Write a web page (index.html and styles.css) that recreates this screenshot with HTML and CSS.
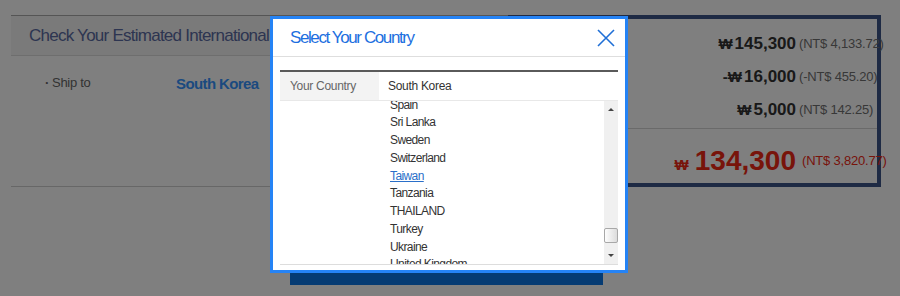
FILE: index.html
```html
<html>

<head>
    <title>Estimated Shipping</title>
    <link rel="stylesheet" href="styles.css">
</head>

<body>
	<div class="estimate">
		<div class="est-main">
			<h2 class="est-title">Check Your Estimated International Shipping Fee</h2>
			<div class="est-row">
				<span class="est-label">Ship to</span>
				<span class="est-country">South Korea</span>
			</div>
		</div>
		<div class="est-summary">
			<div class="sum-lines">
				<span class="amt"><span class="won">₩</span>145,300</span><span class="conv">(NT$ 4,133.72)</span>
				<span class="amt"><span class="won">-₩</span>16,000</span><span class="conv">(-NT$ 455.20)</span>
				<span class="amt"><span class="won">₩</span>5,000</span><span class="conv">(NT$ 142.25)</span>
			</div>
			<div class="sum-total">
				<span class="amt"><span class="won">₩</span>134,300</span><span class="conv">(NT$ 3,820.77)</span>
			</div>
		</div>
	</div>
	<div class="confirm-bar"></div>

	<div class="dim"></div>

	<div class="modal">
		<div class="modal-head">
			<span class="modal-title">Select Your Country</span>
			<svg class="modal-close" width="18" height="18" viewBox="0 0 18 18">
				<path d="M1 1 L17 17 M17 1 L1 17" stroke="#1f6fd6" stroke-width="1.6" fill="none"/>
			</svg>
		</div>
		<div class="modal-body">
			<table class="country-table">
				<tr><th>Your Country</th><td>South Korea</td></tr>
			</table>
			<div class="country-box">
				<div class="country-list">
					<ul>
						<li>Spain</li>
						<li>Sri Lanka</li>
						<li>Sweden</li>
						<li>Switzerland</li>
						<li><a class="current">Taiwan</a></li>
						<li>Tanzania</li>
						<li>THAILAND</li>
						<li>Turkey</li>
						<li>Ukraine</li>
						<li>United Kingdom</li>
						<li>United States</li>
					</ul>
				</div>
				<div class="scrollbar">
					<div class="sb-btn"><span class="arrow-up"></span></div>
					<div class="sb-track"><div class="sb-thumb" style="margin-top:110px"></div></div>
					<div class="sb-btn"><span class="arrow-down"></span></div>
				</div>
			</div>
		</div>
	</div>
</body>

</html>
```

FILE: styles.css
```css
body {
	margin: 0;
	background-color: white;
	font-family: "Liberation Sans", Arial, sans-serif;
	color: #333;
}

/* page behind the popup */

.estimate {
	display: flex;
	margin: 15px 19px 0 11px;
	height: 172px;
}

.est-main {
	flex: 1;
	border-top: 1px solid #aaa;
	border-bottom: 1px solid #cfcfcf;
	overflow: hidden;
}

.est-title {
	margin: 0;
	height: 39px;
	line-height: 40px;
	padding-left: 18px;
	background-color: #f4f4f4;
	border-bottom: 1px solid #dcdcdc;
	font-size: 17px;
	font-weight: 400;
	letter-spacing: -0.75px;
	color: #5a6aa2;
	white-space: nowrap;
}

.est-row {
	display: flex;
	padding: 18px 0 0 34px;
	line-height: 18px;
}

.est-label {
	width: 131px;
	font-size: 13px;
	color: #666;
	letter-spacing: -0.3px;
}

.est-label:before {
	content: "\00B7";
	font-weight: 700;
	margin-right: 3px;
}

.est-country {
	font-size: 15px;
	font-weight: 700;
	color: #3794ff;
	letter-spacing: -0.6px;
	margin-top: 1px;
}

.est-summary {
	width: 365px;
	border: 4px solid #3d5588;
}

.sum-lines {
	display: grid;
	grid-template-columns: 1fr 78px;
	column-gap: 3px;
	padding: 8px 0 2px;
	border-bottom: 1px solid #d4d4d4;
	line-height: 33px;
}

.amt {
	text-align: right;
	font-size: 17px;
	font-weight: 700;
	color: #333;
	white-space: nowrap;
}

.amt .won {
	font-size: 15px;
	margin-right: 2px;
}

.conv {
	font-size: 13px;
	color: #707070;
	letter-spacing: -0.2px;
	white-space: nowrap;
}

.sum-total {
	display: grid;
	grid-template-columns: 1fr 75px;
	column-gap: 6px;
	padding-top: 15px;
	line-height: 34px;
	color: #f02814;
}

.sum-total .amt {
	font-size: 28px;
	color: #f02814;
}

.sum-total .amt .won {
	font-size: 15px;
	margin-right: 6px;
}

.sum-total .conv {
	font-size: 13px;
	color: #f02814;
}

.confirm-bar {
	margin: 62px 0 0 290px;
	width: 313px;
	height: 36px;
	background-color: #0b76e6;
}

/* popup */

.dim {
	position: fixed;
	top: 0;
	left: 0;
	right: 0;
	bottom: 0;
	background-color: rgba(0, 0, 0, 0.5);
}

.modal {
	position: absolute;
	left: 270px;
	top: 16px;
	width: 358px;
	height: 257px;
	box-sizing: border-box;
	border: 3px solid #2583f5;
	background-color: white;
}

.modal-head {
	display: flex;
	align-items: center;
	justify-content: space-between;
	height: 37px;
	padding: 0 10px 0 17px;
	border-bottom: 1px solid #dedede;
}

.modal-title {
	font-size: 17px;
	letter-spacing: -1.4px;
	color: #1d6fe0;
}

.modal-close {
	margin-top: 1px;
}

.modal-body {
	padding: 13px 7px 0;
}

.country-table {
	width: 100%;
	border-collapse: collapse;
	border-top: 2px solid #5a5a5a;
	font-size: 12px;
}

.country-table th,
.country-table td {
	height: 29px;
	padding: 1px 0 0;
	text-align: left;
	font-weight: 400;
	border-bottom: 1px solid #e8e8e8;
	letter-spacing: -0.3px;
}

.country-table th {
	width: 89px;
	padding-left: 10px;
	background-color: #f3f3f3;
	color: #666;
}

.country-table td {
	padding-left: 9px;
	color: #333;
}

.country-box {
	display: flex;
	height: 163px;
	border-bottom: 1px solid #dddddd;
}

.country-list {
	flex: 1;
	overflow: hidden;
}

.country-list ul {
	margin: -4px 0 0;
	padding: 0 0 0 110px;
	list-style: none;
	font-size: 12px;
	line-height: 17.75px;
	letter-spacing: -0.6px;
	color: #333;
}

.current {
	color: #2a6fc9;
	text-decoration: underline;
}

.scrollbar {
	display: flex;
	flex-direction: column;
	width: 14px;
	background-color: #f0f0f0;
}

.sb-btn {
	height: 17px;
	display: flex;
	align-items: center;
	justify-content: center;
}

.sb-track {
	flex: 1;
}

.sb-thumb {
	height: 13px;
	border: 1px solid #a8a8a8;
	border-radius: 2px;
	background: linear-gradient(to right, #fdfdfd, #dcdcdc);
}

.arrow-up {
	border-left: 3px solid transparent;
	border-right: 3px solid transparent;
	border-bottom: 3px solid #444;
}

.arrow-down {
	border-left: 3px solid transparent;
	border-right: 3px solid transparent;
	border-top: 3px solid #444;
}
```
